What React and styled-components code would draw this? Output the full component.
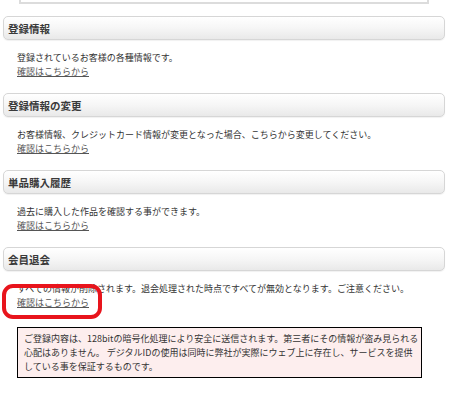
import React from 'react';
import styled, { createGlobalStyle } from 'styled-components';

const GlobalStyle = createGlobalStyle`
  body {
    margin: 0;
    background: #fff;
    font-family: "Noto Sans CJK JP", "Liberation Sans", sans-serif;
    color: #333;
  }
`;

const Page = styled.div`
  padding: 0 8px 0 3px;
`;

const TopBox = styled.div` // bottom edge of the box above
  height: 2px;
  margin: 0 16px 12px 16px;
  border: 2px solid #dcdcdc;
  border-top: none;
`;

const Section = styled.section`
  margin-bottom: ${(p) => (p.$last ? '0' : '14px')};
`;

const SectionHeader = styled.h2`
  box-sizing: border-box;
  height: 24px;
  margin: 0;
  padding: 0 4px;
  display: flex;
  align-items: center;
  font-size: 10.5px;
  font-weight: bold;
  color: #3a3a3a;
  background: linear-gradient(to bottom, #ffffff 0%, #f6f6f6 50%, #e9e9e9 100%);
  border: 1px solid #d6d6d6;
  border-radius: 5px;
  box-shadow: 0 1px 1px rgba(0, 0, 0, 0.06);
`;

const SectionBody = styled.div`
  position: relative;
  padding: 11px 0 0 14px;
  font-size: 9px;
  line-height: 14px;
`;

const Text = styled.p`
  margin: 0;
  white-space: nowrap;
`;

const ConfirmLink = styled.a`
  display: inline-block;
  color: #555;
  text-decoration: underline;
  cursor: pointer;
`;

const Highlight = styled.span` // red hand-drawn mark over the link
  position: absolute;
  left: -1px;
  top: 13px;
  width: 100px;
  height: 35px;
  box-sizing: border-box;
  border: 4.5px solid #e8141c;
  border-radius: 11px;
  pointer-events: none;
`;

const Notice = styled.div`
  margin: 17px 23px 0 14px;
  padding: 4px 6px 3px;
  background: #fdeeee;
  border: 1px solid #000;
  font-size: 9px;
  line-height: 14px;
  color: #333;
  white-space: nowrap;
`;

const sections = [
  { title: '登録情報', text: '登録されているお客様の各種情報です。' },
  {
    title: '登録情報の変更',
    text: 'お客様情報、クレジットカード情報が変更となった場合、こちらから変更してください。',
  },
  { title: '単品購入履歴', text: '過去に購入した作品を確認する事ができます。' },
  {
    title: '会員退会',
    text: 'すべての情報が削除されます。退会処理された時点ですべてが無効となります。ご注意ください。',
    marked: true,
  },
];

const App = () => {
  return (
    <>
      <GlobalStyle />
      <Page>
        <TopBox />
        {sections.map((s, i) => (
          <Section key={s.title} $last={i === sections.length - 1}>
            <SectionHeader>{s.title}</SectionHeader>
            <SectionBody>
              <Text>{s.text}</Text>
              <ConfirmLink>確認はこちらから</ConfirmLink>
              {s.marked && <Highlight />}
            </SectionBody>
          </Section>
        ))}
        <Notice>
          ご登録内容は、128bitの暗号化処理により安全に送信されます。第三者にその情報が盗み見られる
          <br />
          心配はありません。 デジタルIDの使用は同時に弊社が実際にウェブ上に存在し、サービスを提供
          <br />
          している事を保証するものです。
        </Notice>
      </Page>
    </>
  );
};

export default App;
